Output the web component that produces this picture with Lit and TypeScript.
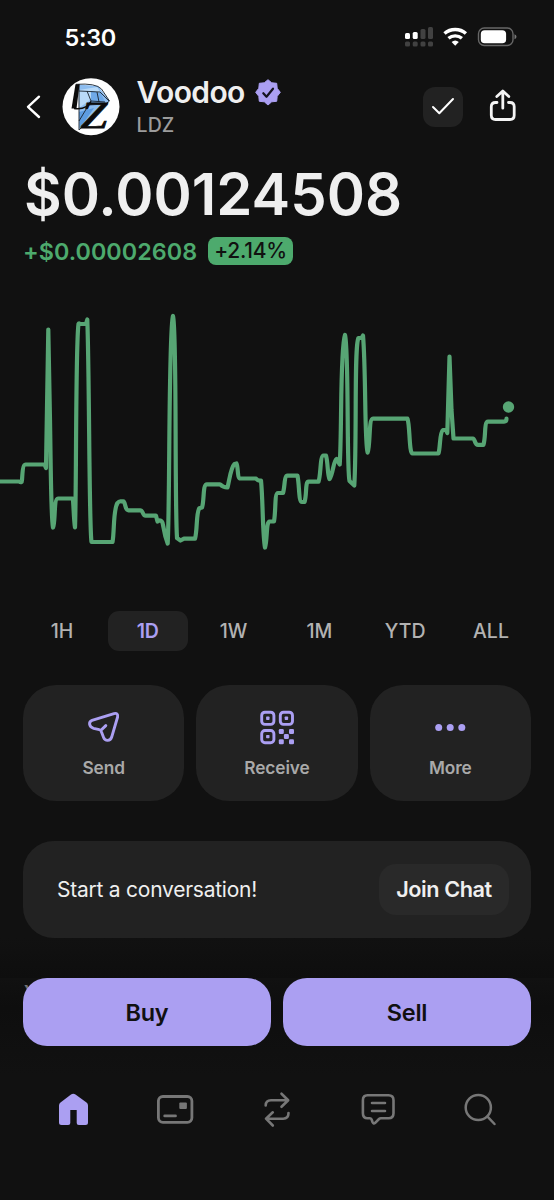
import { LitElement, html, css, svg } from "lit";
import { customElement, state } from "lit/decorators.js";
import { classMap } from "lit/directives/class-map.js";

const CHART_LINE =
  "M-4 481.5H19Q22 483.5 22 480C22.5 472 23 464.5 25.5 464.5H44.5L46 468L48.3 329.5L50 420C51 480 51 518 53 527.5C55.5 524 53.5 498.5 58 498.5H72.5C73.6 500 73.5 518 75 527.5C76.5 490 75.5 345 78.5 324Q79 322.5 80 324H86L87.3 319.5C89.5 380 89 525 91.5 542H112.5C114.5 532 113 510 117.5 503Q119 501 121 501.3H123.5C126 504 125 510.3 128.5 510.3H140.5C143 510.3 142.5 515.7 145.5 515.7H156L157.5 521.5L159 520.5Q162.5 520 163 525L165.3 536L167.7 543.5C170 500 168.5 330 173 316C177 330 174.5 500 177 538L180.5 540.5L184 538.6H195C197.5 530 196 513 199.3 508.3L202 507.5C204.5 500 202.5 484.3 207 484.3H220Q223.500 487.700 227.500 487.500C229.500 480 230.500 468 234.500 464L236.500 463.500C238.500 468 237 478.500 240.500 478.500H256Q257.500 481 261 480.500C263 500 262.500 535 265 547.500C267.500 540 266 521.500 269.500 521.500H274C276 510 274.500 493 278 493H283C285 487 284 475.700 287.500 475.700H297.500C299.500 485 298.500 502 302 502H304.500C307 495 305 481.700 308.500 481.700H318.500C321 475 320 455.500 323.500 455.500H326C328 462 327.500 476 329.500 479C333 475 333.500 460 336.500 459L339.700 464.500C342 430 340 348 345 335C349 350 346.500 470 349.500 481L354.300 485.500C357 440 354 345 358.500 338H361.500L363 335.500C366 370 364.500 445 367.600 452.500C370.500 445 368.500 418.700 373 418.700H407.500C410 425 409 453.500 412.500 453.500H438.500C440.500 447 439.500 432 443 430H446L447.300 433L449.500 356.500L451.500 410L453.500 438.500H473C475 438.500 474.500 444.800 478 444.800H483.500C486 436 484 421.600 488 421.600H504Q506.500 421.500 506.500 418.700";

@customElement("app-root")
export class AppRoot extends LitElement {
  static styles = css`
    :host {
      display: block;
      font-family: Inter, "Liberation Sans", sans-serif;
      color: #efefef;
    }
    * {
      box-sizing: border-box;
    }
    button {
      font: inherit;
      color: inherit;
      background: none;
      border: 0;
      padding: 0;
      margin: 0;
      white-space: nowrap;
    }
    svg {
      display: block;
      flex: none;
    }
    .screen {
      display: flex;
      flex-direction: column;
      width: 554px;
      height: 1200px;
      overflow: hidden;
      background: #111;
    }
    .status {
      height: 74px;
      display: flex;
      align-items: center;
      justify-content: space-between;
      padding: 0 37px 0 64.5px;
    }
    .time {
      font-size: 23.5px;
      font-weight: 600;
      color: #fff;
      letter-spacing: -0.3px;
    }
    .header {
      height: 66px;
      display: flex;
      align-items: center;
      padding: 0 36px 0 26px;
    }
    .logo {
      margin-left: 21px;
    }
    .names {
      flex: 1;
      margin-left: 16.5px;
    }
    .name-row {
      display: flex;
      align-items: center;
      gap: 10.5px;
      height: 36px;
    }
    .name {
      font-size: 30px;
      font-weight: 600;
      letter-spacing: -0.6px;
    }
    .ticker {
      height: 30px;
      line-height: 31px;
      font-size: 19.5px;
      font-weight: 500;
      color: #9c9c9c;
      letter-spacing: 0.1px;
    }
    .watch {
      display: grid;
      place-items: center;
      width: 40px;
      height: 40px;
      border-radius: 12px;
      background: #222;
      margin-right: 26px;
    }
    .price {
      height: 90px;
      padding: 18.5px 0 0 24px;
      font-size: 58px;
      font-weight: 600;
      line-height: 70px;
      white-space: nowrap;
    }
    .change {
      display: flex;
      align-items: center;
      height: 42px;
      padding-left: 23px;
      font-size: 23px;
      font-weight: 500;
      color: #4daa6d;
    }
    .delta {
      width: 185px;
      font-size: 23.3px;
      font-weight: 600;
      letter-spacing: 0.05px;
    }
    .badge {
      height: 28px;
      width: 85px;
      line-height: 28px;
      text-align: center;
      border-radius: 8px;
      background: #4daa6d;
      color: #111;
      font-size: 21px;
      letter-spacing: -0.3px;
    }
    .chart {
      margin-top: 18px;
    }
    .tabs {
      display: grid;
      grid-template-columns: repeat(6, 80px);
      justify-content: space-between;
      margin: 41px 23px 0 22px;
    }
    .tab {
      height: 40px;
      border-radius: 11px;
      font-size: 19.5px;
      font-weight: 500;
      color: #b2b2b2;
    }
    .tab.on {
      background: #222;
      color: #ab9ff2;
      font-weight: 600;
    }
    .actions {
      display: grid;
      grid-template-columns: repeat(3, 1fr);
      gap: 12px;
      margin: 34px 23px 0;
    }
    .action {
      height: 116px;
      border-radius: 33px;
      background: #222;
      color: #a9a9a9;
      font-size: 17.3px;
      font-weight: 600;
      letter-spacing: -0.1px;
      display: flex;
      flex-direction: column;
      align-items: center;
      padding-top: 22px;
    }
    .action span {
      height: 26px;
      line-height: 26px;
      margin-top: 8px;
    }
    .talk {
      display: flex;
      align-items: center;
      justify-content: space-between;
      height: 97px;
      margin: 40px 23px 0;
      padding: 0 22px 0 34px;
      border-radius: 31px;
      background: #222;
      font-size: 21px;
      letter-spacing: -0.24px;
    }
    .join {
      width: 130px;
      height: 51px;
      border-radius: 17px;
      background: #292929;
      font-size: 21.7px;
      font-weight: 600;
      letter-spacing: -0.45px;
      padding-bottom: 2px;
    }
    .more {
      height: 40px;
      padding: 38px 0 0 24px;
      font-size: 18px;
      font-weight: 600;
      line-height: 34px;
      color: #999;
      background: linear-gradient(#111, #0e0e0e);
    }
    .trade {
      position: relative;
      display: grid;
      grid-template-columns: 1fr 1fr;
      gap: 12px;
      padding: 0 23px 28px;
      background: linear-gradient(#0e0e0e00, #0e0e0e 30%, #111);
    }
    .cta {
      height: 68px;
      border-radius: 24px;
      background: #ab9ff2;
      color: #111;
      font-size: 23.5px;
      font-weight: 600;
      letter-spacing: -0.3px;
    }
    .nav {
      display: flex;
      justify-content: space-between;
      align-items: center;
      height: 70px;
      padding: 0 54px 0 53px;
    }
    .nav-item {
      color: #777;
    }
    .nav-item.on {
      color: #ab9ff2;
    }
  `;

  @state() range = "1D";

  private tab(label: string) {
    return html`<button
      class=${classMap({ tab: true, on: this.range === label })}
      @click=${() => (this.range = label)}
    >${label}</button>`;
  }

  private statusIcons() {
    return html`<svg width="112" height="24" viewBox="405 25 112 24">
      <g fill="#414141">
        <rect x="420.500" y="29" width="5" height="10" rx="1.500" />
        <rect x="428" y="27" width="5" height="12" rx="1.500" />
        ${[405, 412.700, 420.500, 428].map(
          (x) => svg`<rect x=${x} y="41.500" width="5" height="5" rx="1.500" />`
        )}
      </g>
      <rect x="405" y="33" width="5" height="6" rx="1.500" fill="#fff" />
      <rect x="412.700" y="32" width="5" height="7" rx="1.500" fill="#fff" />
      <g fill="none" stroke="#fff" stroke-width="3.400">
        <path d="M444.500 33.600C450.500 28.200 459.900 28.200 465.900 33.600" />
        <path d="M448.500 38.300C452.300 35.100 458.100 35.100 461.900 38.300" />
      </g>
      <path d="M455.200 45.800L451.600 42Q455.200 38.900 458.800 42Z" fill="#fff" />
      <rect x="478.500" y="28" width="34.500" height="17.500" rx="5.700" fill="none" stroke="#676767" stroke-width="1.400" />
      <rect x="480.800" y="30.300" width="25.300" height="12.900" rx="3.800" fill="#fff" />
      <path d="M514.500 34.300Q516.500 35 516.500 36.800T514.500 39.300Z" fill="#777" />
    </svg>`;
  }

  private logo() {
    return html`<svg class="logo" width="58" height="58" viewBox="62 78 58 58">
      <circle cx="91" cy="106.700" r="28.500" fill="#fefefe" />
      <path d="M78.500 84.500L98 86L109.500 101L106 104L79.500 130Z" fill="#8dbdf0" />
      <path d="M79 90L97 87L101 93L90 100L79 108Z" fill="#b9daf8" />
      <path d="M91 91L101 93L105 102L91 103Z" fill="#6fa9e8" />
      <path d="M79 112L94 108L79.500 129Z" fill="#5d9ce0" />
      <path
        d="M76 84.300Q96 83 101.500 89L109.500 101L106 104M79 91L100 92L109 101M87 91L91 101L105 102M97 92L99 102M79 84V130L108 102M91 101L79 121"
        fill="none" stroke="#18222d" stroke-width="0.900"
      />
      <path d="M74 108.500Q87 110 91 101.500" fill="none" stroke="#0c0c0c" stroke-width="1.500" />
      <path d="M75.500 84.300H79.500L76.500 108.500H71.500Z" fill="#0c0c0c" />
      <text transform="translate(80.500 127.500) scale(1.300 1)" font-family="Liberation Serif, serif" font-style="italic" font-size="37" fill="#0c0c0c" stroke="#0c0c0c" stroke-width="0.800">Z</text>
    </svg>`;
  }

  render() {
    return html`<main class="screen">
      <div class="status">
        <span class="time">5:30</span>
        ${this.statusIcons()}
      </div>

      <header class="header">
        <svg width="15" height="26" viewBox="26 94 15 26">
          <path d="M39 96.700L28 106.800L39 117" fill="none" stroke="#fff" stroke-width="2.400" stroke-linecap="round" stroke-linejoin="round" />
        </svg>
        ${this.logo()}
        <div class="names">
          <div class="name-row">
            <span class="name">Voodoo</span>
            <svg width="26" height="27" viewBox="255 79 26 27">
              <path
                d="M268 79.700L271.700 82.800L276.700 83.300L277.200 88.300L280.300 92.300L277.200 96.300L276.700 101.300L271.700 101.800L268 105L264.300 101.800L259.300 101.300L258.800 96.300L255.700 92.300L258.800 88.300L259.300 83.300L264.300 82.800Z"
                fill="#ab9ff2" stroke="#ab9ff2" stroke-linejoin="round"
              />
              <path d="M263.300 93.200L266.500 96.800L273 88.700" fill="none" stroke="#151320" stroke-width="2.200" stroke-linecap="round" stroke-linejoin="round" />
            </svg>
          </div>
          <div class="ticker">LDZ</div>
        </div>
        <button class="watch" aria-label="Watchlist">
          <svg width="24" height="20" viewBox="431 97 24 20">
            <path d="M433 107L439.300 113.200L453 99" fill="none" stroke="#fff" stroke-width="2" stroke-linecap="round" stroke-linejoin="round" />
          </svg>
        </button>
        <svg width="29" height="36" viewBox="489 89 29 36">
          <g fill="none" stroke="#f4f4f4" stroke-width="2.800" stroke-linecap="round" stroke-linejoin="round">
            <path d="M497 102.500H495.500Q491.300 102.500 491.300 106.700V115.300Q491.300 119.500 495.500 119.500H510Q514.200 119.500 514.200 115.300V106.700Q514.200 102.500 510 102.500H508.500" />
            <path d="M502.800 108.200V91.500M496.800 96.500L502.800 91L508.800 96.500" />
          </g>
        </svg>
      </header>

      <div class="price">$0.00124508</div>
      <div class="change">
        <span class="delta">+$0.00002608</span>
        <span class="badge">+2.14%</span>
      </div>

      <svg class="chart" width="554" height="280" viewBox="0 290 554 280">
        <path d=${CHART_LINE} fill="none" stroke="#57a574" stroke-width="4.200" stroke-linecap="round" stroke-linejoin="round" />
        <circle cx="508.500" cy="407" r="5.700" fill="#57a574" />
      </svg>

      <div class="tabs">
        ${["1H", "1D", "1W", "1M", "YTD", "ALL"].map((t) => this.tab(t))}
      </div>

      <div class="actions">
        <button class="action">
          <svg width="40" height="40" viewBox="84 707 40 40">
            <path
              d="M92 720.300L114 713.600Q118.300 712.600 117.600 717L111.600 737.300C110.300 741.300 105.200 741.500 103.600 737.500L101.300 731.500Q100.800 730 99.300 729.700L93.600 728.300C88.800 727 88.300 721.700 92 720.300ZM101 730.300L105.800 725.600"
              fill="none" stroke="#ab9ff2" stroke-width="2.900" stroke-linecap="round" stroke-linejoin="round"
            />
          </svg>
          <span>Send</span>
        </button>
        <button class="action">
          <svg width="40" height="40" viewBox="257 707 40 40">
            <g fill="none" stroke="#ab9ff2" stroke-width="2.900">
              <rect x="261.700" y="712.200" width="12.200" height="12.200" rx="3.200" />
              <rect x="280.300" y="712.200" width="12.200" height="12.200" rx="3.200" />
              <rect x="261.700" y="730.500" width="12.200" height="12.200" rx="3.200" />
            </g>
            <g fill="#ab9ff2">
              <rect x="266.100" y="716.600" width="3.400" height="3.400" rx="0.700" />
              <rect x="284.700" y="716.600" width="3.400" height="3.400" rx="0.700" />
              <rect x="266.100" y="734.900" width="3.400" height="3.400" rx="0.700" />
              ${[
                [278.800, 729],
                [289, 729],
                [283.900, 734.100],
                [278.800, 739.200],
                [289, 739.200],
              ].map(([x, y]) => svg`<rect x=${x} y=${y} width="5" height="5" rx="1.300" />`)}
            </g>
          </svg>
          <span>Receive</span>
        </button>
        <button class="action">
          <svg width="40" height="40" viewBox="430 707 40 40">
            ${[438.700, 450.200, 461.800].map(
              (x) => svg`<circle cx=${x} cy="727.500" r="3.500" fill="#ab9ff2" />`
            )}
          </svg>
          <span>More</span>
        </button>
      </div>

      <div class="talk">
        <span class="prompt">Start a conversation!</span>
        <button class="join">Join Chat</button>
      </div>

      <div class="more">Y</div>
      <div class="trade">
        <button class="cta">Buy</button>
        <button class="cta">Sell</button>
      </div>

      <nav class="nav">
        <svg class="nav-item on" width="40" height="40" viewBox="53 1089 40 40">
          <path
            d="M71 1094.600Q73.200 1093 75.500 1094.600L86.500 1102.500Q88 1103.600 88 1105.500V1122.500Q88 1125 85.500 1125H78.800Q76.700 1125 76.700 1123V1110H70.300V1123Q70.300 1125 68.200 1125H61.500Q59 1125 59 1122.500V1105.500Q59 1103.600 60.500 1102.500Z"
            fill="currentColor"
          />
        </svg>
        <svg class="nav-item" width="40" height="40" viewBox="155 1089 40 40">
          <rect x="158.400" y="1096.500" width="33.500" height="25.800" rx="4.500" fill="none" stroke="currentColor" stroke-width="2.800" />
          <rect x="179.300" y="1102.500" width="7.600" height="6.500" rx="1" fill="currentColor" />
          <path d="M164.700 1115.900H175.500" stroke="currentColor" stroke-width="2.800" stroke-linecap="round" />
        </svg>
        <svg class="nav-item" width="40" height="40" viewBox="257 1089 40 40">
          <g fill="none" stroke="currentColor" stroke-width="2.600" stroke-linecap="round" stroke-linejoin="round">
            <path d="M265.700 1105.500C265.700 1101.500 267.500 1100.200 271 1100.200H288M281.500 1093.700L288.200 1100.200L281.500 1106.800" />
            <path d="M288.500 1113C288.500 1117 286.700 1118.700 283.200 1118.700H266.500M272.800 1112.300L266 1118.700L272.800 1125.500" />
          </g>
        </svg>
        <svg class="nav-item" width="40" height="40" viewBox="358 1089 40 40">
          <g fill="none" stroke="currentColor" stroke-width="2.600" stroke-linecap="round" stroke-linejoin="round">
            <path d="M367.500 1095.300H388.500Q393.500 1095.300 393.500 1100.300V1113.200Q393.500 1118.200 388.500 1118.200H380.800Q379.800 1118.200 379 1119L375.200 1122.800Q373.500 1124.300 372.600 1122.300L371.500 1119.300Q371 1118.200 369.800 1118.200H367.500Q362.900 1118.200 362.900 1113.200V1100.300Q362.900 1095.300 367.500 1095.300Z" />
            <path d="M372 1103H385M372 1111H385" />
          </g>
        </svg>
        <svg class="nav-item" width="40" height="40" viewBox="460 1089 40 40">
          <g fill="none" stroke="currentColor" stroke-width="2.500" stroke-linecap="round">
            <circle cx="478.300" cy="1107.500" r="12.600" />
            <path d="M487.500 1116.700L494.500 1124" />
          </g>
        </svg>
      </nav>
    </main>`;
  }
}
